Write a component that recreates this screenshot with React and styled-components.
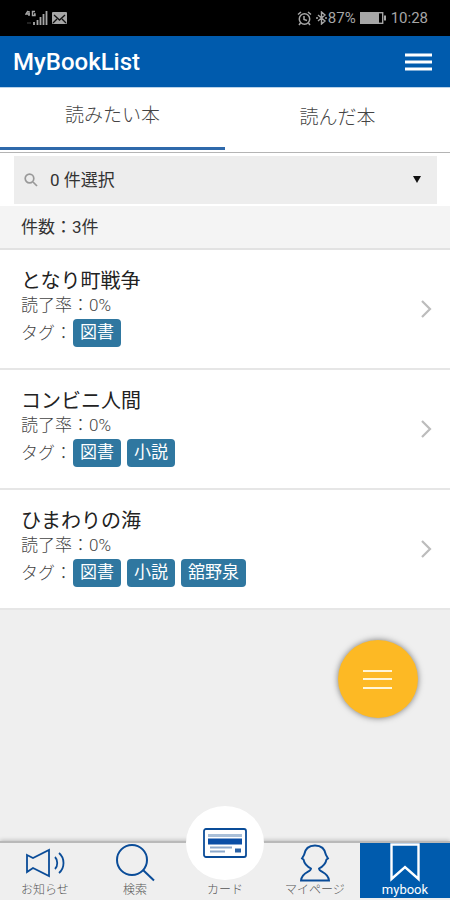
import React from "react";
import styled, { createGlobalStyle } from "styled-components";

const GlobalStyle = createGlobalStyle`
  *, *::before, *::after { box-sizing: border-box; }
  body {
    margin: 0;
    background: #efefef;
    color: #333;
    font-family: Roboto, "Noto Sans CJK JP", sans-serif;
    font-size: 17px;
  }
  button, select { font: inherit; color: inherit; }
`;

const Screen = styled.div`
  display: flex;
  flex-direction: column;
  min-height: 100vh;
`;

const StatusBar = styled.div`
  display: flex;
  align-items: center;
  justify-content: space-between;
  height: 36px;
  padding: 0 22px 0 25px;
  background: #000;
  color: #a6a6a6;
  font-size: 15px;
`;

const StatusGroup = styled.div`
  display: flex;
  align-items: center;
  gap: ${(p) => p.$gap}px;
`;

const StatusPair = styled.span`
  display: flex;
  align-items: center;
  gap: 1px;
`;

const AppBar = styled.header`
  display: flex;
  align-items: center;
  justify-content: space-between;
  height: 52px;
  padding: 0 18px 0 13px;
  background: #005bad;
  border-bottom: 1px solid #b9d3ea;
`;

const AppTitle = styled.h1`
  margin: 0;
  color: #fff;
  font-size: 24px;
  font-weight: 500;
  line-height: 32px;
`;

const IconButton = styled.button`
  display: flex;
  padding: 0;
  border: 0;
  background: none;
  cursor: pointer;
`;

const Tabs = styled.div`
  display: grid;
  grid-template-columns: 1fr 1fr;
  height: 65px;
  background: #fff;
  border-bottom: 1px solid #b4b4b4;
`;

const Tab = styled.button`
  padding: 0 0 ${(p) => (p.$active ? 8 : 10)}px;
  border: 0;
  border-bottom: ${(p) => (p.$active ? "3px solid #2f69ab" : "0")};
  margin-bottom: ${(p) => (p.$active ? 2 : 0)}px;
  background: none;
  color: #444;
  font-size: 19px;
  font-weight: 300;
  cursor: pointer;
`;

const FilterArea = styled.div`
  padding: 3px 13px 2px 14px;
  background: #fff;
`;

const FilterField = styled.label`
  display: grid;
  grid-template-columns: 34px 1fr 24px;
  align-items: center;
  height: 48px;
  background: #ededed;

  > * { grid-row: 1; }
  > svg { pointer-events: none; z-index: 1; }
`;

const FilterSelect = styled.select`
  grid-column: 1 / -1;
  width: 100%;
  height: 100%;
  padding: 0 28px 0 36px;
  border: 0;
  appearance: none;
  background: none;
`;

const FilterIcon = styled.svg`
  grid-column: ${(p) => p.$column};
  justify-self: ${(p) => (p.$column === 1 ? "center" : "start")};
`;

const CountBar = styled.div`
  height: 44px;
  padding: 0 21px;
  background: #f4f4f4;
  border-bottom: 2px solid #e2e2e2;
  line-height: 42px;
`;

const BookList = styled.ul`
  margin: 0;
  padding: 0;
  list-style: none;
  background: #fff;
`;

const BookRow = styled.li`
  border-bottom: 2px solid #e6e6e6;
`;

const BookLink = styled.a`
  display: flex;
  align-items: center;
  justify-content: space-between;
  padding: 17px 17px 17px 21px;
  color: inherit;
  text-decoration: none;
`;

const BookTitle = styled.h2`
  margin: 0;
  color: #222;
  font-size: 20px;
  font-weight: 400;
  line-height: 28px;
`;

const BookLine = styled.div`
  display: flex;
  align-items: center;
  gap: 1px;
  color: #444;
  font-weight: 300;
  line-height: ${(p) => p.$height}px;
`;

const Tags = styled.span`
  display: flex;
  flex-wrap: wrap;
  gap: 6px;
  padding: 4px 0;
`;

const Tag = styled.span`
  height: 28px;
  padding: 0 7px;
  border-radius: 4px;
  background: #2f77a0;
  color: #fff;
  font-weight: 400;
  line-height: 27px;
`;

const Fab = styled.button`
  position: fixed;
  right: 32px;
  bottom: 182px;
  display: flex;
  align-items: center;
  justify-content: center;
  width: 80px;
  height: 78px;
  padding: 0;
  border: 0;
  border-radius: 50%;
  background: #fdb924;
  box-shadow: 0 0 6px rgba(0, 0, 0, 0.5);
  cursor: pointer;
`;

const BottomNav = styled.nav`
  display: grid;
  grid-template-columns: repeat(5, 1fr);
  grid-template-rows: minmax(0, 1fr);
  height: 59px;
  margin-top: auto;
  padding-bottom: 2px;
  border-top: 2px solid #b9b9b9;
  box-shadow: 0 -1px 4px rgba(0, 0, 0, 0.2);
  background: #efefef;
`;

const NavItem = styled.a`
  display: flex;
  flex-direction: column;
  align-items: center;
  justify-content: flex-end;
  background: ${(p) => (p.$active ? "#005bad" : "none")};
  color: ${(p) => (p.$active ? "#fff" : "#555")};
  font-size: ${(p) => (p.$active ? 13 : 12)}px;
  font-weight: ${(p) => (p.$active ? 400 : 300)};
  line-height: 16px;
  text-decoration: none;
  white-space: nowrap;

  > svg { flex: none; }
`;

const CardDisc = styled.span`
  display: flex;
  align-items: center;
  justify-content: center;
  flex: none;
  width: 78px;
  height: 74px;
  margin-bottom: 2px;
  border-radius: 50%;
  background: #fff;
`;

const books = [
  { title: "となり町戦争", tags: ["図書"] },
  { title: "コンビニ人間", tags: ["図書", "小説"] },
  { title: "ひまわりの海", tags: ["図書", "小説", "舘野泉"] },
];

const SignalIcon = () => (
  <svg width="24" height="16" viewBox="0 0 24 16" fill="none" stroke="#a6a6a6">
    <path d="M3 1 1 4h4M4 1v5M10 1.500H7.500v4H10V4H9" strokeWidth="1.400" />
    <path d="M9 15v-3M12.500 15v-5M15.500 15V7M18.500 15V4M21.500 15V1" strokeWidth="1.800" />
    <path d="M2 13h4" stroke="#444" />
  </svg>
);

const MailIcon = () => (
  <svg width="15" height="12" viewBox="0 0 15 12">
    <rect width="15" height="12" rx="1" fill="#a6a6a6" />
    <path d="m2 3 5.500 5L13 3M1 11l4-4M14 11l-4-4" fill="none" stroke="#111" strokeWidth="1.300" />
  </svg>
);

const AlarmIcon = () => (
  <svg width="15" height="15" viewBox="0 0 15 15" fill="none" stroke="#a6a6a6" strokeWidth="1.500">
    <circle cx="7.500" cy="8" r="5.200" />
    <path d="M7 5v3.500l3 1M1 3.500 4 1M14 3.500 11 1M3.500 12 2 14M11.500 12l1.500 2" />
  </svg>
);

const BluetoothIcon = () => (
  <svg width="11" height="14" viewBox="0 0 11 14" fill="none" stroke="#a6a6a6" strokeWidth="1.400">
    <path d="m2 4 7 6-3.500 3V1L9 4l-7 6M0 7h2M9 7h2" />
  </svg>
);

const BatteryIcon = () => (
  <svg width="27" height="12" viewBox="0 0 27 12">
    <rect x=".7" y=".7" width="22" height="10.600" fill="none" stroke="#a6a6a6" strokeWidth="1.400" />
    <path d="M1 1h18v10H1zM24 3.500h2v5h-2z" fill="#a6a6a6" />
  </svg>
);

const MenuIcon = () => (
  <svg width="27" height="20" viewBox="0 0 27 20" fill="none" stroke="#fff" strokeWidth="3">
    <path d="M0 3h27M0 10h27M0 17h27" />
  </svg>
);

const FabIcon = () => (
  <svg width="30" height="22" viewBox="0 0 30 22" fill="none" stroke="#fff6d8" strokeWidth="2">
    <path d="M0 3h29M0 11h29M0 20h29" />
  </svg>
);

const ChevronIcon = () => (
  <svg width="14" height="18" viewBox="0 0 14 18" fill="none" stroke="#bcbcbc" strokeWidth="2.200">
    <path d="m3 1 8 8-8 8" />
  </svg>
);

const NewsIcon = () => (
  <svg width="42" height="34" viewBox="0 0 42 34" fill="none" stroke="#0a4c98" strokeWidth="1.800">
    <path d="M3 7l6 3L25 2v26L9 20l-6 4zM31 9c3 3 3 9 0 12M35 5c6 5 6 15 0 20" />
  </svg>
);

const SearchIcon = () => (
  <svg width="40" height="38" viewBox="0 0 40 38" fill="none" stroke="#0a4c98" strokeWidth="2">
    <circle cx="17" cy="16" r="15" />
    <path d="m28 26 11 10.500" />
  </svg>
);

const CardIcon = () => (
  <svg width="44" height="30" viewBox="0 0 44 30" fill="none">
    <rect x="1" y="1" width="42" height="28" rx="2" stroke="#0a4c98" strokeWidth="1.800" />
    <path d="M5 7.500h34" stroke="#a9bfd8" strokeWidth="3" />
    <path d="M5 13.500h34" stroke="#0a4ea6" strokeWidth="6" />
    <path d="M7 19.500h22M7 23.500h15" stroke="#8da9cb" strokeWidth="2" />
    <path d="M32 22.500h6" stroke="#2a62a6" strokeWidth="4" />
  </svg>
);

const PersonIcon = () => (
  <svg width="32" height="38" viewBox="0 0 32 38" fill="none" stroke="#0a4c98" strokeWidth="1.900">
    <path d="M12 24.500C7 22 5 18 4.500 15.500L3 14.500l2-3.500C6 5 10 1.500 16 1.500S26 5 27 11l2 3.500-1.500 1C27 18 25 22 20 24.500c0 4 9 3 10 12H2c1-9 10-8 10-12z" />
  </svg>
);

const BookmarkIcon = () => (
  <svg width="30" height="39" viewBox="0 0 30 39" fill="none" stroke="#fff" strokeWidth="2.400">
    <path d="M1.500 1.500h27V36L15 24 1.500 36z" />
  </svg>
);

export default function App() {
  return (
    <Screen>
      <GlobalStyle />
      <StatusBar>
        <StatusGroup $gap={3}>
          <SignalIcon />
          <MailIcon />
        </StatusGroup>
        <StatusGroup $gap={4}>
          <AlarmIcon />
          <StatusPair>
            <BluetoothIcon />
            87%
          </StatusPair>
          <BatteryIcon />
          <span>10:28</span>
        </StatusGroup>
      </StatusBar>

      <AppBar>
        <AppTitle>MyBookList</AppTitle>
        <IconButton aria-label="メニュー">
          <MenuIcon />
        </IconButton>
      </AppBar>

      <Tabs role="tablist">
        <Tab role="tab" aria-selected="true" $active>読みたい本</Tab>
        <Tab role="tab" aria-selected="false">読んだ本</Tab>
      </Tabs>

      <FilterArea>
        <FilterField>
          <FilterIcon $column={1} width="14" height="14" viewBox="0 0 14 14" fill="none" stroke="#999" strokeWidth="1.700">
            <circle cx="5.500" cy="5.500" r="4.300" />
            <path d="m9 9 4 4" />
          </FilterIcon>
          <FilterSelect aria-label="タグ">
            <option>0 件選択</option>
          </FilterSelect>
          <FilterIcon $column={3} width="8" height="8" viewBox="0 0 8 8">
            <path d="M0 0h8L4 7z" fill="#111" />
          </FilterIcon>
        </FilterField>
      </FilterArea>

      <CountBar>件数：3件</CountBar>

      <BookList>
        {books.map((book) => (
          <BookRow key={book.title}>
            <BookLink href="#">
              <div>
                <BookTitle>{book.title}</BookTitle>
                <BookLine $height={20}>読了率：0%</BookLine>
                <BookLine $height={36}>
                  タグ：
                  <Tags>
                    {book.tags.map((tag) => (
                      <Tag key={tag}>{tag}</Tag>
                    ))}
                  </Tags>
                </BookLine>
              </div>
              <ChevronIcon />
            </BookLink>
          </BookRow>
        ))}
      </BookList>

      <Fab aria-label="操作メニュー">
        <FabIcon />
      </Fab>

      <BottomNav>
        <NavItem href="#"><NewsIcon />お知らせ</NavItem>
        <NavItem href="#"><SearchIcon />検索</NavItem>
        <NavItem href="#">
          <CardDisc><CardIcon /></CardDisc>
          カード
        </NavItem>
        <NavItem href="#"><PersonIcon />マイページ</NavItem>
        <NavItem href="#" aria-current="page" $active><BookmarkIcon />mybook</NavItem>
      </BottomNav>
    </Screen>
  );
}
